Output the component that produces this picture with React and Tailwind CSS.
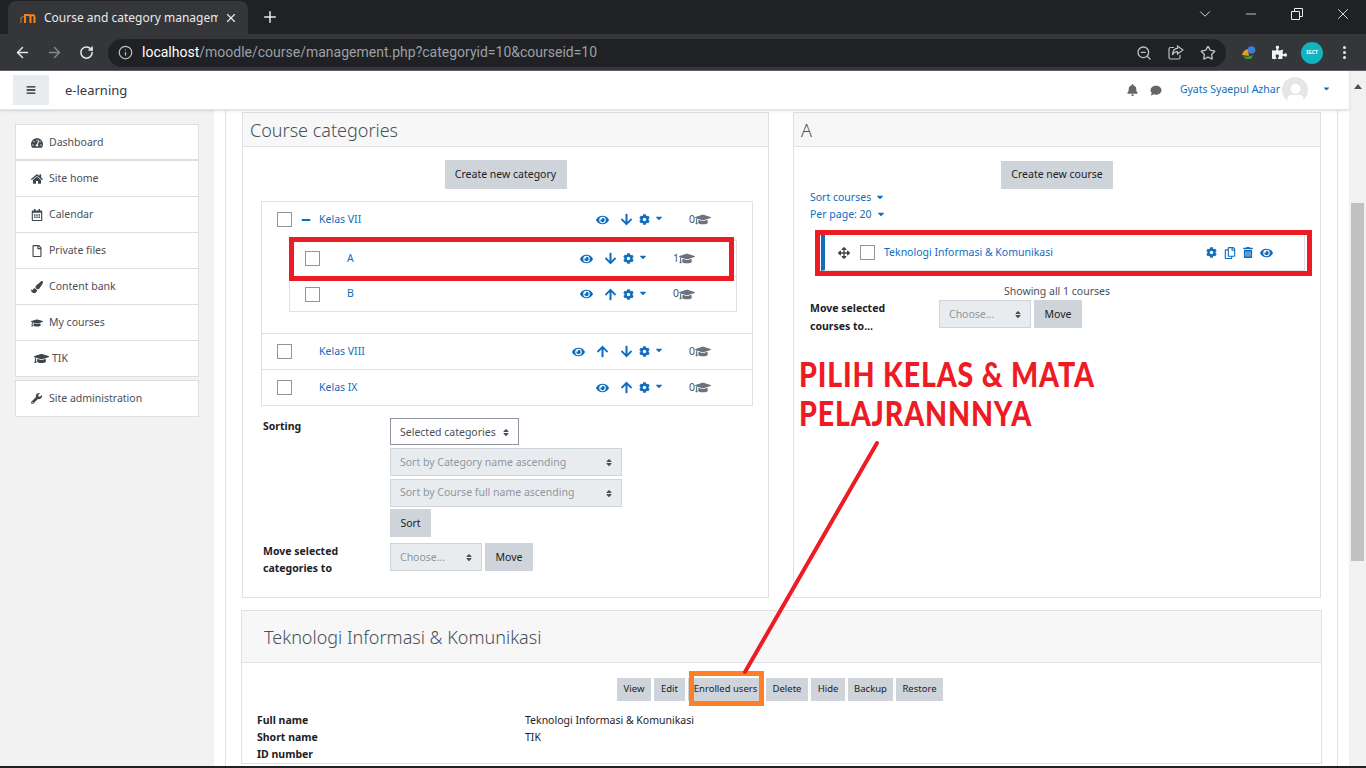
import React from "react";
import { ArrowLeft, ArrowRight, RotateCw, Info, ZoomOut, Star, X, Plus, ChevronDown, Minus } from "lucide-react";
import {
    FaTachometerAlt, FaHome, FaRegCalendarAlt, FaRegFile, FaPaintBrush, FaGraduationCap, FaWrench,
    FaEye, FaArrowDown, FaArrowUp, FaCog, FaBell, FaComment, FaBars, FaArrowsAlt, FaRegCopy, FaTrashAlt,
    FaPuzzlePiece, FaUser, FaCaretDown, FaSort, FaMinus
} from "react-icons/fa";

const navItems = [
    { label: "Dashboard", icon: FaTachometerAlt, gap: true },
    { label: "Site home", icon: FaHome },
    { label: "Calendar", icon: FaRegCalendarAlt },
    { label: "Private files", icon: FaRegFile },
    { label: "Content bank", icon: FaPaintBrush },
    { label: "My courses", icon: FaGraduationCap }
];

function Btn({ children, className = "" }) {
    return (
        <span className={`inline-flex items-center justify-center bg-[#ced4da] text-[#1d2125] text-[10.5px] ${className}`}>
            {children}
        </span>
    );
}

function Check() {
    return <span className="block w-[15px] h-[15px] border border-[#8f959e] bg-white shrink-0" />;
}

function Select({ label, className = "", disabled = true }) {
    return (
        <span className={`flex items-center justify-between border border-[#8f959e] text-[10.5px] pl-[9px] pr-[8px] ${disabled ? "bg-[#e9ecef] border-[#ced4da] text-[#8f959e]" : "bg-white text-[#495057]"} ${className}`}>
            {label}
            <FaSort className="text-[#495057] w-[8px] h-[9px]" />
        </span>
    );
}

function RowActions({ arrows, count }) {
    return (
        <div className="flex items-center ml-auto text-[#0f6cbf]">
            <FaEye className="w-[13px] h-[12px] mr-[11px]" />
            {arrows.map((a, i) => {
                const gap = i === arrows.length - 1 ? "mr-[6px]" : "mr-[11px]";
                return a === "up"
                    ? <FaArrowUp key={i} className={`w-[13px] h-[13px] ${gap}`} />
                    : <FaArrowDown key={i} className={`w-[13px] h-[13px] ${gap}`} />;
            })}
            <FaCog className="w-[11px] h-[11px] mr-[4px]" />
            <FaCaretDown className="w-[10px] h-[10px] mb-[3px]" />
            <span className="ml-[25px] text-[10.5px] text-[#495057] w-[6px]">{count}</span>
            <FaGraduationCap className="w-[16px] h-[13px] text-[#6a737b]" />
        </div>
    );
}

function CatRow({ name, arrows, count, border = true, expanded }) {
    return (
        <div className={`flex items-center pl-[15px] pr-[41px] ${border ? "h-[36px] border-t border-[#dee2e6]" : "h-[35px] mb-[3px]"}`}>
            <Check />
            <span className="w-[27px] flex justify-center text-[#0f6cbf]">
                {expanded && <FaMinus className="w-[10px] h-[10px]" />}
            </span>
            <span className="text-[10.5px] text-[#0f6cbf]">{name}</span>
            <RowActions arrows={arrows} count={count} />
        </div>
    );
}

function SubRow({ name, arrows, count, border }) {
    return (
        <div className={`flex items-center h-[35px] pl-[15px] pr-[41px] ${border ? "border-t border-[#dee2e6]" : ""}`}>
            <Check />
            <span className="ml-[27px] text-[10.5px] text-[#0f6cbf]">{name}</span>
            <RowActions arrows={arrows} count={count} />
        </div>
    );
}

function Panel({ title, className = "", children }) {
    return (
        <section className={`border border-[#dee2e6] flex flex-col ${className}`}>
            <h2 className="h-[34px] shrink-0 bg-[#f7f7f7] border-b border-[#dee2e6] pt-[1px] pl-[7px] flex items-center text-[18px] text-[#495057] font-light">
                {title}
            </h2>
            {children}
        </section>
    );
}

function BrowserChrome() {
    return (
        <div className="h-[71px] shrink-0 bg-[#202124] flex flex-col">
            <div className="h-[34px] flex items-end pl-[8px]">
                <div className="w-[240px] h-[33px] bg-[#35363a] rounded-t-lg flex items-center pl-[12px] pr-[10px]">
                    <svg width="16" height="11" viewBox="0 0 16 11" className="shrink-0 mr-[8px]">
                        <path d="M1 11V6l3-2" stroke="#8a6a50" strokeWidth="1.5" fill="none" />
                        <path d="M5 11V3h3.5q2 0 2 2v6M10.5 5q0-2 2-2t2 2v6" stroke="#f98012" strokeWidth="2" fill="none" />
                    </svg>
                    <span className="text-[12px] text-[#e8eaed] whitespace-nowrap overflow-hidden flex-1">Course and category management</span>
                    <X className="w-[14px] h-[14px] ml-[6px] text-[#e8eaed] shrink-0" />
                </div>
                <Plus className="w-[18px] h-[18px] text-[#e8eaed] ml-[13px] mb-[8px]" />
                <div className="ml-auto self-start flex h-[28px] text-[#e8eaed]">
                    <span className="w-[46px] flex items-center justify-center"><ChevronDown className="w-[18px] h-[18px]" strokeWidth={1.2} /></span>
                    <span className="w-[46px] flex items-center justify-center"><Minus className="w-[16px] h-[16px]" strokeWidth={1.2} /></span>
                    <span className="w-[46px] flex items-center justify-center">
                        <svg width="12" height="12" viewBox="0 0 12 12" fill="none" stroke="currentColor">
                            <path d="M.5 3.5h8v8h-8zM3.5 3V.5h8v8H9" />
                        </svg>
                    </span>
                    <span className="w-[46px] flex items-center justify-center"><X className="w-[18px] h-[18px]" strokeWidth={1.2} /></span>
                </div>
            </div>
            <div className="h-[37px] pt-[1px] bg-[#35363a] flex items-center pl-[14px] text-[#e8eaed] border-b border-[#5f6064]">
                <ArrowLeft className="w-[17px] h-[17px]" />
                <ArrowRight className="w-[17px] h-[17px] ml-[15px] text-[#87898c]" />
                <RotateCw className="w-[15px] h-[15px] ml-[16px]" strokeWidth={2.4} />
                <div className="ml-[14px] w-[1118px] h-[28px] bg-[#202124] rounded-full flex items-center pl-[10px] pr-[10px]">
                    <Info className="w-[15px] h-[15px] text-[#bdc1c6]" />
                    <span className="ml-[9px] text-[14px] text-[#9aa0a6] font-[Roboto,sans-serif]">
                        <span className="text-white">localhost</span>/moodle/course/management.php?categoryid=10&courseid=10
                    </span>
                    <div className="ml-auto flex items-center gap-[16px] text-[#bdc1c6]">
                        <ZoomOut className="w-[16px] h-[16px]" />
                        <svg width="16" height="15" viewBox="0 0 16 15" fill="none" stroke="currentColor" strokeWidth="1.2">
                            <path d="M6 2.5H2.5q-1.5 0-1.5 1.5v8.5q0 1.5 1.5 1.5h8q1.5 0 1.5-1.5V10" />
                            <path d="M9.5 1l5.5 4-5.5 4V6.7Q6 6.7 4.5 10 4.5 3.6 9.5 3.3z" />
                        </svg>
                        <Star className="w-[16px] h-[16px]" />
                    </div>
                </div>
                <div className="ml-[15px] flex items-center">
                    <svg width="16" height="14" viewBox="0 0 16 14">
                        <path d="M1 9q1-5 6-6l1 7z" fill="#e0a020" />
                        <path d="M1 9q3 3 8 1l3-1-2 4-5 0z" fill="#3d9a35" />
                        <circle cx="10.5" cy="4" r="3.8" fill="#3f7fd0" />
                    </svg>
                    <FaPuzzlePiece className="w-[15px] h-[15px] ml-[15px] text-[#f1f3f4]" />
                    <span className="ml-[14px] w-[22px] h-[22px] rounded-full bg-[#14b3c0] flex items-center justify-center text-[5px] font-bold text-white">IGCT</span>
                    <span className="ml-[20px] flex flex-col gap-[2px]">
                        <span className="w-[3px] h-[3px] rounded-full bg-[#e8eaed]" />
                        <span className="w-[3px] h-[3px] rounded-full bg-[#e8eaed]" />
                        <span className="w-[3px] h-[3px] rounded-full bg-[#e8eaed]" />
                    </span>
                </div>
            </div>
        </div>
    );
}

function Sidebar() {
    return (
        <aside className="w-[214px] shrink-0 bg-[#f2f2f2] pl-[15px] pt-[14px]">
            <div className="w-[184px] border border-[#dedede] bg-white">
                {navItems.map(({ label, icon: Icon, gap }) => (
                    <div key={label} className={`flex items-center h-[36px] pl-[15px] text-[10.5px] text-[#495057] border-[#dedede] ${gap ? "border-b-2 pt-[2px]" : "border-b"}`}>
                        <Icon className="w-[12px] h-[12px] text-[#3e464d] mr-[6px]" />
                        {label}
                    </div>
                ))}
                <div className="flex items-center h-[35px] pl-[18px] text-[10.5px] text-[#495057]">
                    <FaGraduationCap className="w-[15px] h-[13px] text-[#3e464d] mr-[3px]" />
                    TIK
                </div>
            </div>
            <div className="w-[184px] h-[37px] mt-[3px] flex items-center pl-[15px] border border-[#dedede] bg-white text-[10.5px] text-[#495057]">
                <FaWrench className="w-[11px] h-[11px] text-[#3e464d] mr-[7px]" />
                Site administration
            </div>
        </aside>
    );
}

function CategoriesPanel() {
    return (
        <Panel title="Course categories" className="w-[527px] h-[486px]">
            <div className="flex justify-center pt-[13px]">
                <Btn className="w-[122px] h-[29px]">Create new category</Btn>
            </div>
            <div className="ml-[18px] mr-[15px] mt-[12px] border border-[#dee2e6]">
                <CatRow name="Kelas VII" arrows={["down"]} count="0" border={false} expanded />
                <div className="ml-[27px] mr-[15px] mb-[21px] border border-[#dee2e6]">
                    <SubRow name="A" arrows={["down"]} count="1" />
                    <SubRow name="B" arrows={["up"]} count="0" border />
                </div>
                <CatRow name="Kelas VIII" arrows={["up", "down"]} count="0" />
                <CatRow name="Kelas IX" arrows={["up"]} count="0" />
            </div>
            <div className="flex ml-[20px] mt-[12px]">
                <span className="w-[127px] pt-[1px] text-[10.5px] font-bold text-[#1d2125]">Sorting</span>
                <div className="flex flex-col items-start">
                    <Select label="Selected categories" disabled={false} className="w-[129px] h-[27px] pt-[2px]" />
                    <Select label="Sort by Category name ascending" className="w-[232px] h-[28px] mt-[3px] pt-[1px]" />
                    <Select label="Sort by Course full name ascending" className="w-[232px] h-[28px] mt-[3px]" />
                    <Btn className="w-[41px] h-[28px] mt-[2px] pt-[1px]">Sort</Btn>
                </div>
            </div>
            <div className="flex ml-[20px] mt-[6px]">
                <span className="w-[127px] text-[10.5px] leading-[17px] font-bold text-[#1d2125]">Move selected<br />categories to</span>
                <Select label="Choose..." className="w-[92px] h-[28px] pt-[1px]" />
                <Btn className="w-[48px] h-[28px] ml-[3px] pt-[1px]">Move</Btn>
            </div>
        </Panel>
    );
}

function CoursesPanel() {
    return (
        <Panel title="A" className="w-[528px] h-[486px]">
            <div className="flex justify-center pt-[14px]">
                <Btn className="w-[112px] h-[28px]">Create new course</Btn>
            </div>
            <div className="ml-[16px] text-[10.5px] text-[#0f6cbf] leading-[17px]">
                <div className="flex items-center gap-[4px]">Sort courses <FaCaretDown className="w-[10px] h-[10px] mb-[2px]" /></div>
                <div className="flex items-center gap-[4px]">Per page: 20 <FaCaretDown className="w-[10px] h-[10px] mb-[2px]" /></div>
            </div>
            <div className="ml-[27px] mr-[15px] mt-[12px] h-[36px] flex items-center border-l-[4px] border-l-[#0f6cbf] border-r border-b border-[#dee2e6] pl-[13px] pr-[31px]">
                <FaArrowsAlt className="w-[12px] h-[12px] text-[#3e464d]" />
                <span className="ml-[10px]"><Check /></span>
                <span className="ml-[9px] text-[10.5px] text-[#0f6cbf]">Teknologi Informasi &amp; Komunikasi</span>
                <div className="ml-auto flex items-center gap-[7px] text-[#0f6cbf]">
                    <FaCog className="w-[11px] h-[11px]" />
                    <FaRegCopy className="w-[12px] h-[12px]" />
                    <FaTrashAlt className="w-[10px] h-[11px]" />
                    <FaEye className="w-[13px] h-[12px]" />
                </div>
            </div>
            <div className="text-center text-[10.5px] text-[#495057] mt-[13px] leading-[14px]">Showing all 1 courses</div>
            <div className="flex ml-[16px] mt-[2px]">
                <span className="w-[129px] -mt-[1px] text-[10.5px] leading-[18px] font-bold text-[#1d2125]">Move selected<br />courses to...</span>
                <Select label="Choose..." className="w-[92px] h-[28px] pt-[1px]" />
                <Btn className="w-[48px] h-[28px] ml-[3px] pt-[1px]">Move</Btn>
            </div>
        </Panel>
    );
}

function CoursePanel() {
    const actions = [
        ["View", "w-[34px]"], ["Edit", "w-[31px]"], ["Enrolled users", "w-[75px]"], ["Delete", "w-[42px]"],
        ["Hide", "w-[34px]"], ["Backup", "w-[45px]"], ["Restore", "w-[47px]"]
    ];
    return (
        <section className="w-[1081px] -ml-[1px] mt-[12px] border border-[#dee2e6]">
            <h2 className="h-[52px] bg-[#f7f7f7] border-b border-[#dee2e6] pt-[1px] pl-[22px] flex items-center text-[18px] text-[#495057] font-light">
                Teknologi Informasi &amp; Komunikasi
            </h2>
            <div className="flex justify-center gap-[3px] mt-[15px] pr-[3px]">
                {actions.map(([label, w]) => <Btn key={label} className={`${w} h-[23px] !text-[9.5px]`}>{label}</Btn>)}
            </div>
            <dl className="grid grid-cols-[268px_1fr] ml-[15px] mt-[11px] text-[10.5px] leading-[17px] text-[#1d2125]">
                <dt className="font-bold">Full name</dt><dd>Teknologi Informasi &amp; Komunikasi</dd>
                <dt className="font-bold">Short name</dt><dd>TIK</dd>
                <dt className="font-bold">ID number</dt><dd></dd>
            </dl>
        </section>
    );
}

function Annotations() {
    return (
        <>
            <div className="absolute left-[289px] top-[237px] w-[445px] h-[44px] border-[5px] border-[#ed1c24]" />
            <div className="absolute left-[815px] top-[230px] w-[497px] h-[46px] border-[5px] border-[#ed1c24]" />
            <div className="absolute left-[689px] top-[671px] w-[75px] h-[35px] border-[5px] border-[#ff7f27]" />
            <svg className="absolute left-0 top-0" width="1366" height="768" fill="none">
                <path d="M877 443L745 672" stroke="#ed1c24" strokeWidth="4" strokeLinecap="round" />
            </svg>
            <div className="absolute left-[799px] top-[354px] origin-left scale-x-[0.84] text-[#ed1c24] font-black text-[34px] leading-[40px] tracking-[1px] whitespace-nowrap font-[Lato,sans-serif]">PILIH KELAS &amp; MATA</div>
            <div className="absolute left-[799px] top-[393px] origin-left scale-x-[0.84] text-[#ed1c24] font-black text-[34px] leading-[40px] tracking-[1px] whitespace-nowrap font-[Lato,sans-serif]">PELAJRANNNYA</div>
        </>
    );
}

export default function App() {
    return (
        <div className="relative w-[1366px] h-[768px] overflow-hidden flex flex-col bg-white font-['Noto_Sans',sans-serif]">
            <BrowserChrome />
            <div className="flex-1 min-h-0 flex">
                <div className="flex-1 min-w-0 flex flex-col">
                    <header className="h-[39px] shrink-0 bg-white border-b border-[#e5e5e5] shadow-sm flex items-center pl-[13px] pr-[18px] z-10">
                        <span className="w-[36px] h-[30px] bg-[#e9ecef] flex items-center justify-center">
                            <FaBars className="w-[10px] h-[10px] text-[#1d2125]" />
                        </span>
                        <span className="ml-[16px] mt-[1px] text-[13px] text-[#343a40]">e-learning</span>
                        <FaBell className="ml-auto w-[11px] h-[12px] text-[#666]" />
                        <FaComment className="ml-[12px] w-[12px] h-[11px] text-[#666]" />
                        <span className="ml-[18px] text-[10.5px] text-[#0f6cbf]">Gyats Syaepul Azhar</span>
                        <span className="ml-[2px] w-[26px] h-[26px] rounded-full bg-[#e6e6e6] flex items-end justify-center overflow-hidden">
                            <FaUser className="w-[17px] h-[19px] text-white" />
                        </span>
                        <FaCaretDown className="ml-[14px] mb-[4px] w-[9px] h-[9px] text-[#0f6cbf]" />
                    </header>
                    <div className="flex-1 min-h-0 flex">
                        <Sidebar />
                        <main className="w-[1113px] shrink-0 bg-white border-x border-[#dee2e6] ml-[11px] pl-[16px]">
                            <div className="flex gap-[24px] pt-[2px]">
                                <CategoriesPanel />
                                <CoursesPanel />
                            </div>
                            <CoursePanel />
                        </main>
                    </div>
                </div>
                <div className="relative w-[17px] shrink-0 bg-[#f1f1f1] flex flex-col items-center">
                    <span className="mt-[13px] w-0 h-0 border-x-[4px] border-x-transparent border-b-[5px] border-b-[#505050]" />
                    <span className="absolute top-[132px] left-[2px] w-[13px] h-[358px] bg-[#c1c1c1]" />
                </div>
            </div>
            <div className="absolute left-0 right-0 bottom-0 h-[2px] bg-[#202124]" />
            <Annotations />
        </div>
    );
}
